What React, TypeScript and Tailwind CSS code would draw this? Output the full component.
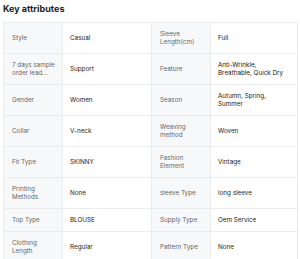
import React from "react";

const rows: [string[], string[], string[], string[]][] = [
  [["Style"], ["Casual"], ["Sleeve", "Length(cm)"], ["Full"]],
  [["7 days sample", "order lead..."], ["Support"], ["Feature"], ["Anti-Wrinkle,", "Breathable, Quick Dry"]],
  [["Gender"], ["Women"], ["Season"], ["Autumn, Spring,", "Summer"]],
  [["Collar"], ["V-neck"], ["Weaving", "method"], ["Woven"]],
  [["Fit Type"], ["SKINNY"], ["Fashion", "Element"], ["Vintage"]],
  [["Printing", "Methods"], ["None"], ["sleeve Type"], ["long sleeve"]],
  [["Top Type"], ["BLOUSE"], ["Supply Type"], ["Oem Service"]],
  [["Clothing", "Length"], ["Regular"], ["Pattern Type"], ["None"]],
];

function Lines({ lines }: { lines: string[] }) {
  return (
    <div className="flex flex-col">
      {lines.map((l, i) => (
        <span key={i} className="whitespace-nowrap">{l}</span>
      ))}
    </div>
  );
}

function Label({ lines }: { lines: string[] }) {
  return (
    <div className="flex items-center bg-[#f7f8fa] border-b border-r border-[#ececec] pl-[8px] py-[7px] text-[#666] leading-[8px] overflow-hidden">
      <Lines lines={lines} />
    </div>
  );
}

function Value({ lines }: { lines: string[] }) {
  return (
    <div className="flex items-center border-b border-r border-[#ececec] pl-[7px] py-[7px] text-[#222] leading-[8px] overflow-hidden">
      <Lines lines={lines} />
    </div>
  );
}

export default function App() {
  return (
    <div className="w-[300px] h-[259px] bg-white overflow-hidden px-[3px] pt-[2px] font-['Inter',sans-serif]">
      <div className="text-[9px] leading-[13px] font-bold text-[#222] mb-[7px]">Key attributes</div>
      <div className="grid grid-cols-[59px_89px_59px_87px] border-t border-l border-[#ececec] text-[6.3px]">
        {rows.map((r, i) => (
          <React.Fragment key={i}>
            <Label lines={r[0]} />
            <Value lines={r[1]} />
            <Label lines={r[2]} />
            <Value lines={r[3]} />
          </React.Fragment>
        ))}
      </div>
    </div>
  );
}
